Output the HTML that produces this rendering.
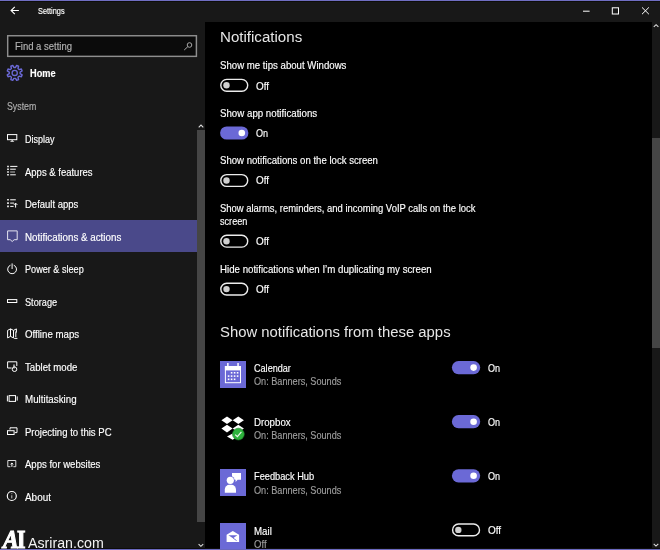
<!DOCTYPE html><html><head><meta charset="utf-8"><title>Settings</title><style>

html,body{margin:0;padding:0;background:#000;}
body{width:660px;height:550px;position:relative;overflow:hidden;font-family:'Liberation Sans', sans-serif;}
.a{position:absolute}
.t{position:absolute;white-space:nowrap;transform-origin:0 0;line-height:1;-webkit-text-stroke:0.15px currentColor;}
svg{position:absolute;overflow:visible}

</style></head><body>
<div class="a" style="left:0;top:0;width:660px;height:22px;background:#181818"></div>
<div class="a" style="left:0;top:22px;width:205px;height:528px;background:#181818"></div>
<div class="a" style="left:652px;top:22px;width:8px;height:528px;background:#181818"></div>
<div class="a" style="left:652px;top:138px;width:8px;height:210px;background:#454545"></div>
<div class="a" style="left:197px;top:130px;width:8px;height:392px;background:#454545"></div>
<div class="a" style="left:0;top:220px;width:197px;height:32px;background:#4a498a"></div>
<div class="a" style="left:7px;top:35px;width:190px;height:22px;background:#0b0b0b"></div>
<svg style="left:0;top:0" width="210" height="60" viewBox="0 0 210 60"><rect x="7.7" y="35.75" width="188.7" height="20.6" fill="none" stroke="#8e8e8e" stroke-width="1.45"/></svg>
<div class="a" style="left:0;top:0;width:660px;height:1px;background:#706ec2"></div>
<div class="a" style="left:0;top:1px;width:660px;height:1px;background:#0d0d0a"></div>
<div class="a" style="left:0;top:548px;width:660px;height:1px;background:#0c0c0a"></div>
<div class="a" style="left:0;top:549px;width:660px;height:1px;background:#6a68be"></div>
<div class="a" style="left:220px;top:361px;width:26px;height:27px;background:#6b69d6"></div>
<div class="a" style="left:220px;top:469px;width:26px;height:27.2px;background:#6b69d6"></div>
<div class="a" style="left:220px;top:523px;width:26px;height:26px;background:#6b69d6"></div>
<svg style="left:0;top:0" width="660" height="550" viewBox="0 0 660 550" fill="none" stroke="#fff" stroke-width="1">
<path d="M18.9 10.5H11.2M14.8 6.9L11.1 10.5L14.8 14.1" stroke-width="1.15"/>
<path d="M583 11.2H589.6" stroke-width="1"/>
<rect x="612.3" y="7.8" width="6.2" height="6.2" stroke-width="1"/>
<path d="M642 7.4L648.9 14.2M648.9 7.4L642 14.2" stroke-width="1"/>
<path d="M653.8 26.9L656.1 24.7L658.4 26.9" stroke="#ddd" stroke-width="1.1"/>
<path d="M653.7 543.9L656.0 546.1L658.3 543.9" stroke="#ddd" stroke-width="1.1"/>
<path d="M198.7 127.3L201.0 125.1L203.3 127.3" stroke="#ddd" stroke-width="1.1"/>
<path d="M198.6 544.1L200.9 546.3L203.2 544.1" stroke="#ddd" stroke-width="1.1"/>
<g stroke="#a8a8a8" stroke-width="1"><circle cx="189.5" cy="45" r="2.3"/><path d="M187.8 46.7L184.2 50"/></g>
<path d="M20.14 73.72L22.14 74.87L21.36 76.77L19.12 76.17L17.97 77.32L18.57 79.56L16.67 80.34L15.52 78.34L13.88 78.34L12.73 80.34L10.83 79.56L11.43 77.32L10.28 76.17L8.04 76.77L7.26 74.87L9.26 73.72L9.26 72.08L7.26 70.93L8.04 69.03L10.28 69.63L11.43 68.48L10.83 66.24L12.73 65.46L13.88 67.46L15.52 67.46L16.67 65.46L18.57 66.24L17.97 68.48L19.12 69.63L21.36 69.03L22.14 70.93L20.14 72.08Z" stroke="#6b69d6" stroke-width="1.4" stroke-linejoin="round"/>
<circle cx="14.7" cy="72.9" r="2.6" stroke="#6b69d6" stroke-width="1.3"/>
<rect x="7.5" y="134.6" width="9.3" height="5.1"/><path d="M10 141.7L12.2 140.1L14.4 141.7Z" fill="#fff" stroke="none"/>
<path d="M7.2 166.4H8.8M7.2 169.2H8.8M7.2 172.0H8.8M7.2 174.8H8.8" stroke-width="1.5"/>
<path d="M10.2 166.4H17.4M10.2 169.2H15.8M10.2 174.8H15.8"/><path d="M10.2 172.0H15" stroke="#bbb"/>
<path d="M7.2 199.8H8.8M7.2 203.1H8.8M7.2 206.4H8.8" stroke-width="1.6"/>
<path d="M10.2 199.8H15.8M10.2 203.1H14M10.2 206.4H13.6"/><path d="M15.6 207.6V203.2M13.9 204.9L15.6 203.1L17.3 204.9" stroke-width="1"/>
<path d="M7.6 230.9H17.2V239.7H14.2L12.2 241.5L10.2 239.7H7.6Z" stroke-linejoin="round" stroke="#e4e4f0"/>
<path d="M10.5 265.2A4.4 4.4 0 1 0 13.7 265.2M12.1 263.4V269"/>
<rect x="7.5" y="299.6" width="9.3" height="2.9"/>
<path d="M7.6 330.4L10.5 328.9L13.5 330.4L16.4 328.9V332.6M7.6 330.4V337.9L10.5 336.4L13.5 337.9M10.5 328.9V336.4M13.5 330.4V337.9" stroke-width="1"/><path d="M15.8 331.5V337.2M14.2 338.4H17.4" stroke-width="1"/>
<path d="M11.6 368H7.6V361.8H16.8V366"/><circle cx="14.5" cy="369.2" r="2.3" stroke-width="1"/><path d="M14 368.4V364.6" stroke-width="1.1"/>
<rect x="9.1" y="395.6" width="6.4" height="5.8"/><path d="M7.4 395.6V401.4M17.2 396.4V400.6"/>
<path d="M10 429.6V427.8H17V432.6H14.8"/><rect x="7.5" y="430.7" width="6.6" height="3.8"/>
<path d="M10.4 466.7H7.8V460.5H15.8V466.7H13.4" stroke="#ddd"/><path d="M11.9 466.9V463.2M10.5 464.4L11.9 463L13.3 464.4" stroke-width="1"/>
<circle cx="11.8" cy="496" r="4.5" stroke-width="1.15"/><path d="M11.8 495.3V498.4M11.8 493.3V494.2" stroke-width="1" stroke="#c4c4c4"/>
<g stroke="none" fill="#fff"><rect x="224.9" y="366" width="16.1" height="4.4"/><rect x="227.1" y="363" width="1.5" height="4"/><rect x="237.3" y="363" width="1.5" height="4"/></g>
<rect x="225.4" y="366.5" width="15.1" height="16.2" stroke="#fff" stroke-width="1"/>
<g stroke="none" fill="#fff"><rect x="230.8" y="372.0" width="1.6" height="1.6"/><rect x="233.8" y="372.0" width="1.6" height="1.6"/><rect x="236.8" y="372.0" width="1.6" height="1.6"/><rect x="227.8" y="375.3" width="1.6" height="1.6"/><rect x="230.8" y="375.3" width="1.6" height="1.6"/><rect x="233.8" y="375.3" width="1.6" height="1.6"/><rect x="236.8" y="375.3" width="1.6" height="1.6"/><rect x="227.8" y="378.5" width="1.6" height="1.6"/><rect x="230.8" y="378.5" width="1.6" height="1.6"/><rect x="233.8" y="378.5" width="1.6" height="1.6"/></g>
<path stroke="none" fill="#fff" d="M221.4 420.3L227.0 416.5L232.6 420.3L227.0 424.1ZM232.7 420.3L238.3 416.5L243.9 420.3L238.3 424.1ZM221.4 428.6L227.0 424.8L232.6 428.6L227.0 432.4ZM232.7 428.6L238.3 424.8L243.9 428.6L238.3 432.4ZM227.0 436.6L232.6 433.4L238.2 436.6L232.6 439.8Z"/>
<circle cx="238.4" cy="434.1" r="5.9" fill="#2db23c" stroke="#1c7a28" stroke-width="0.6"/>
<path d="M235.2 434.6L237.4 436.6L241.4 431.8" stroke="#eaf6ea" stroke-width="1.2"/>
<path stroke="none" fill="#fff" d="M232 473H241V479.8H237.6L235.6 482V479.8H232Z"/>
<circle cx="230.3" cy="480.3" r="4.3" fill="#6b69d6" stroke="none"/>
<circle cx="230.3" cy="480.3" r="3.6" fill="#fff" stroke="none"/>
<path stroke="none" fill="#fff" d="M224.8 492.8V489.4A4.6 4.6 0 0 1 229.4 484.8H231.4A4.6 4.6 0 0 1 236 489.4V492.8Z"/>
<path stroke="none" fill="#fff" d="M226.6 534.7L232.8 531L239.1 534.7V541.9H226.6Z"/>
<path stroke="none" fill="#6b69d6" d="M228.4 535.2H237.4L233 538.3Z"/>
<path d="M233 538L236.6 540.6" stroke="#6b69d6" stroke-width="0.9"/>
</svg>
<svg style="left:0;top:0" width="660" height="550" viewBox="0 0 660 550">
<rect x="220.80" y="79.40" width="26.900000000000002" height="11.799999999999999" rx="5.8999999999999995" fill="none" stroke="#ececec" stroke-width="1.4"/><circle cx="226.50" cy="85.30" r="3.2" fill="#cfcfcf"/>
<rect x="220.10" y="126.40" width="28.3" height="13.2" rx="6.6" fill="#6b69d6"/><circle cx="241.80" cy="133.00" r="3.3" fill="#fff"/>
<rect x="220.80" y="174.60" width="26.900000000000002" height="11.799999999999999" rx="5.8999999999999995" fill="none" stroke="#ececec" stroke-width="1.4"/><circle cx="226.50" cy="180.50" r="3.2" fill="#cfcfcf"/>
<rect x="220.80" y="235.30" width="26.900000000000002" height="11.799999999999999" rx="5.8999999999999995" fill="none" stroke="#ececec" stroke-width="1.4"/><circle cx="226.50" cy="241.20" r="3.2" fill="#cfcfcf"/>
<rect x="220.80" y="283.20" width="26.900000000000002" height="11.799999999999999" rx="5.8999999999999995" fill="none" stroke="#ececec" stroke-width="1.4"/><circle cx="226.50" cy="289.10" r="3.2" fill="#cfcfcf"/>
<rect x="451.90" y="361.00" width="28.3" height="13.2" rx="6.6" fill="#6b69d6"/><circle cx="473.60" cy="367.60" r="3.3" fill="#fff"/>
<rect x="451.90" y="415.10" width="28.3" height="13.2" rx="6.6" fill="#6b69d6"/><circle cx="473.60" cy="421.70" r="3.3" fill="#fff"/>
<rect x="451.90" y="469.20" width="28.3" height="13.2" rx="6.6" fill="#6b69d6"/><circle cx="473.60" cy="475.80" r="3.3" fill="#fff"/>
<rect x="452.60" y="524.00" width="26.900000000000002" height="11.799999999999999" rx="5.8999999999999995" fill="none" stroke="#ececec" stroke-width="1.4"/><circle cx="458.30" cy="529.90" r="3.2" fill="#cfcfcf"/>
</svg>
<div id="tx" style="position:absolute;left:0;top:0;width:660px;height:550px;will-change:transform">
<span class="t" style="left:37.70px;top:6.68px;font-size:9px;color:#fff;transform:scaleX(0.8177)">Settings</span>
<span class="t" style="left:14.70px;top:41.87px;font-size:10.2px;color:#b4b4b4;transform:scaleX(0.9318)">Find a setting</span>
<span class="t" style="left:29.80px;top:69.03px;font-size:10px;color:#fff;font-weight:700;transform:scaleX(0.9213)">Home</span>
<span class="t" style="left:6.70px;top:100.81px;font-size:10.5px;color:#b0b0b0;transform:scaleX(0.8366)">System</span>
<span class="t" style="left:24.60px;top:135.07px;font-size:10.2px;color:#fff;transform:scaleX(0.8861)">Display</span>
<span class="t" style="left:25.00px;top:167.57px;font-size:10.2px;color:#fff;transform:scaleX(0.9324)">Apps &amp; features</span>
<span class="t" style="left:24.60px;top:200.07px;font-size:10.2px;color:#fff;transform:scaleX(0.9316)">Default apps</span>
<span class="t" style="left:24.60px;top:232.57px;font-size:10.2px;color:#fff;transform:scaleX(0.9608)">Notifications &amp; actions</span>
<span class="t" style="left:24.60px;top:265.07px;font-size:10.2px;color:#fff;transform:scaleX(0.8937)">Power &amp; sleep</span>
<span class="t" style="left:24.60px;top:297.57px;font-size:10.2px;color:#fff;transform:scaleX(0.8996)">Storage</span>
<span class="t" style="left:24.60px;top:330.07px;font-size:10.2px;color:#fff;transform:scaleX(0.9489)">Offline maps</span>
<span class="t" style="left:24.60px;top:362.57px;font-size:10.2px;color:#fff;transform:scaleX(0.9439)">Tablet mode</span>
<span class="t" style="left:24.60px;top:395.07px;font-size:10.2px;color:#fff;transform:scaleX(0.9589)">Multitasking</span>
<span class="t" style="left:24.60px;top:427.57px;font-size:10.2px;color:#fff;transform:scaleX(0.9376)">Projecting to this PC</span>
<span class="t" style="left:25.00px;top:460.07px;font-size:10.2px;color:#fff;transform:scaleX(0.9376)">Apps for websites</span>
<span class="t" style="left:25.00px;top:492.57px;font-size:10.2px;color:#fff;transform:scaleX(0.9742)">About</span>
<span class="t" style="left:28.30px;top:534.88px;font-size:15.5px;color:#f4f4f4;-webkit-text-stroke-width:0px;transform:scaleX(0.9172)">Asriran.com</span>
<span class="t" style="left:3.18px;top:526.86px;font-size:25px;color:#fff;font-weight:700;-webkit-text-stroke-width:1.1px;font-family:'Liberation Serif',serif;font-style:italic;transform:scaleX(0.9389)">A</span>
<span class="t" style="left:16.60px;top:526.86px;font-size:25px;color:#fff;font-weight:700;-webkit-text-stroke-width:1.1px;font-family:'Liberation Serif',serif;transform:scaleX(0.8667)">I</span>
<span class="t" style="left:219.52px;top:29.26px;font-size:15.4px;color:#e6e6e6;-webkit-text-stroke-width:0px;transform:scaleX(0.9803)">Notifications</span>
<span class="t" style="left:220.10px;top:60.31px;font-size:10.5px;color:#fff;transform:scaleX(0.9179)">Show me tips about Windows</span>
<span class="t" style="left:256.30px;top:80.61px;font-size:10.5px;color:#fff;transform:scaleX(0.9428)">Off</span>
<span class="t" style="left:220.10px;top:107.91px;font-size:10.5px;color:#fff;transform:scaleX(0.9245)">Show app notifications</span>
<span class="t" style="left:256.30px;top:128.11px;font-size:10.5px;color:#fff;transform:scaleX(0.8611)">On</span>
<span class="t" style="left:220.10px;top:155.31px;font-size:10.5px;color:#fff;transform:scaleX(0.9143)">Show notifications on the lock screen</span>
<span class="t" style="left:256.30px;top:175.41px;font-size:10.5px;color:#fff;transform:scaleX(0.9428)">Off</span>
<span class="t" style="left:220.10px;top:202.71px;font-size:10.5px;color:#fff;transform:scaleX(0.8994)">Show alarms, reminders, and incoming VoIP calls on the lock</span>
<span class="t" style="left:220.10px;top:216.11px;font-size:10.5px;color:#fff;transform:scaleX(0.8682)">screen</span>
<span class="t" style="left:256.30px;top:236.21px;font-size:10.5px;color:#fff;transform:scaleX(0.9428)">Off</span>
<span class="t" style="left:220.10px;top:263.91px;font-size:10.5px;color:#fff;transform:scaleX(0.9232)">Hide notifications when I’m duplicating my screen</span>
<span class="t" style="left:256.30px;top:283.91px;font-size:10.5px;color:#fff;transform:scaleX(0.9428)">Off</span>
<span class="t" style="left:220.10px;top:324.35px;font-size:15.3px;color:#e6e6e6;-webkit-text-stroke-width:0px;transform:scaleX(0.9719)">Show notifications from these apps</span>
<span class="t" style="left:253.70px;top:363.41px;font-size:10.5px;color:#fff;transform:scaleX(0.8652)">Calendar</span>
<span class="t" style="left:253.70px;top:376.31px;font-size:10.5px;color:#9e9e9e;transform:scaleX(0.8697)">On: Banners, Sounds</span>
<span class="t" style="left:488.00px;top:362.81px;font-size:10.5px;color:#fff;transform:scaleX(0.8611)">On</span>
<span class="t" style="left:253.70px;top:416.81px;font-size:10.5px;color:#fff;transform:scaleX(0.9224)">Dropbox</span>
<span class="t" style="left:253.70px;top:430.41px;font-size:10.5px;color:#9e9e9e;transform:scaleX(0.8697)">On: Banners, Sounds</span>
<span class="t" style="left:488.00px;top:416.91px;font-size:10.5px;color:#fff;transform:scaleX(0.8611)">On</span>
<span class="t" style="left:253.70px;top:470.91px;font-size:10.5px;color:#fff;transform:scaleX(0.8809)">Feedback Hub</span>
<span class="t" style="left:253.70px;top:484.51px;font-size:10.5px;color:#9e9e9e;transform:scaleX(0.8697)">On: Banners, Sounds</span>
<span class="t" style="left:488.00px;top:471.01px;font-size:10.5px;color:#fff;transform:scaleX(0.8611)">On</span>
<span class="t" style="left:253.70px;top:525.71px;font-size:10.5px;color:#fff;transform:scaleX(0.9250)">Mail</span>
<span class="t" style="left:253.70px;top:538.61px;font-size:10.5px;color:#9e9e9e;transform:scaleX(0.9068)">Off</span>
<span class="t" style="left:488.00px;top:525.11px;font-size:10.5px;color:#fff;transform:scaleX(0.9500)">Off</span>
</div>
</body></html>
